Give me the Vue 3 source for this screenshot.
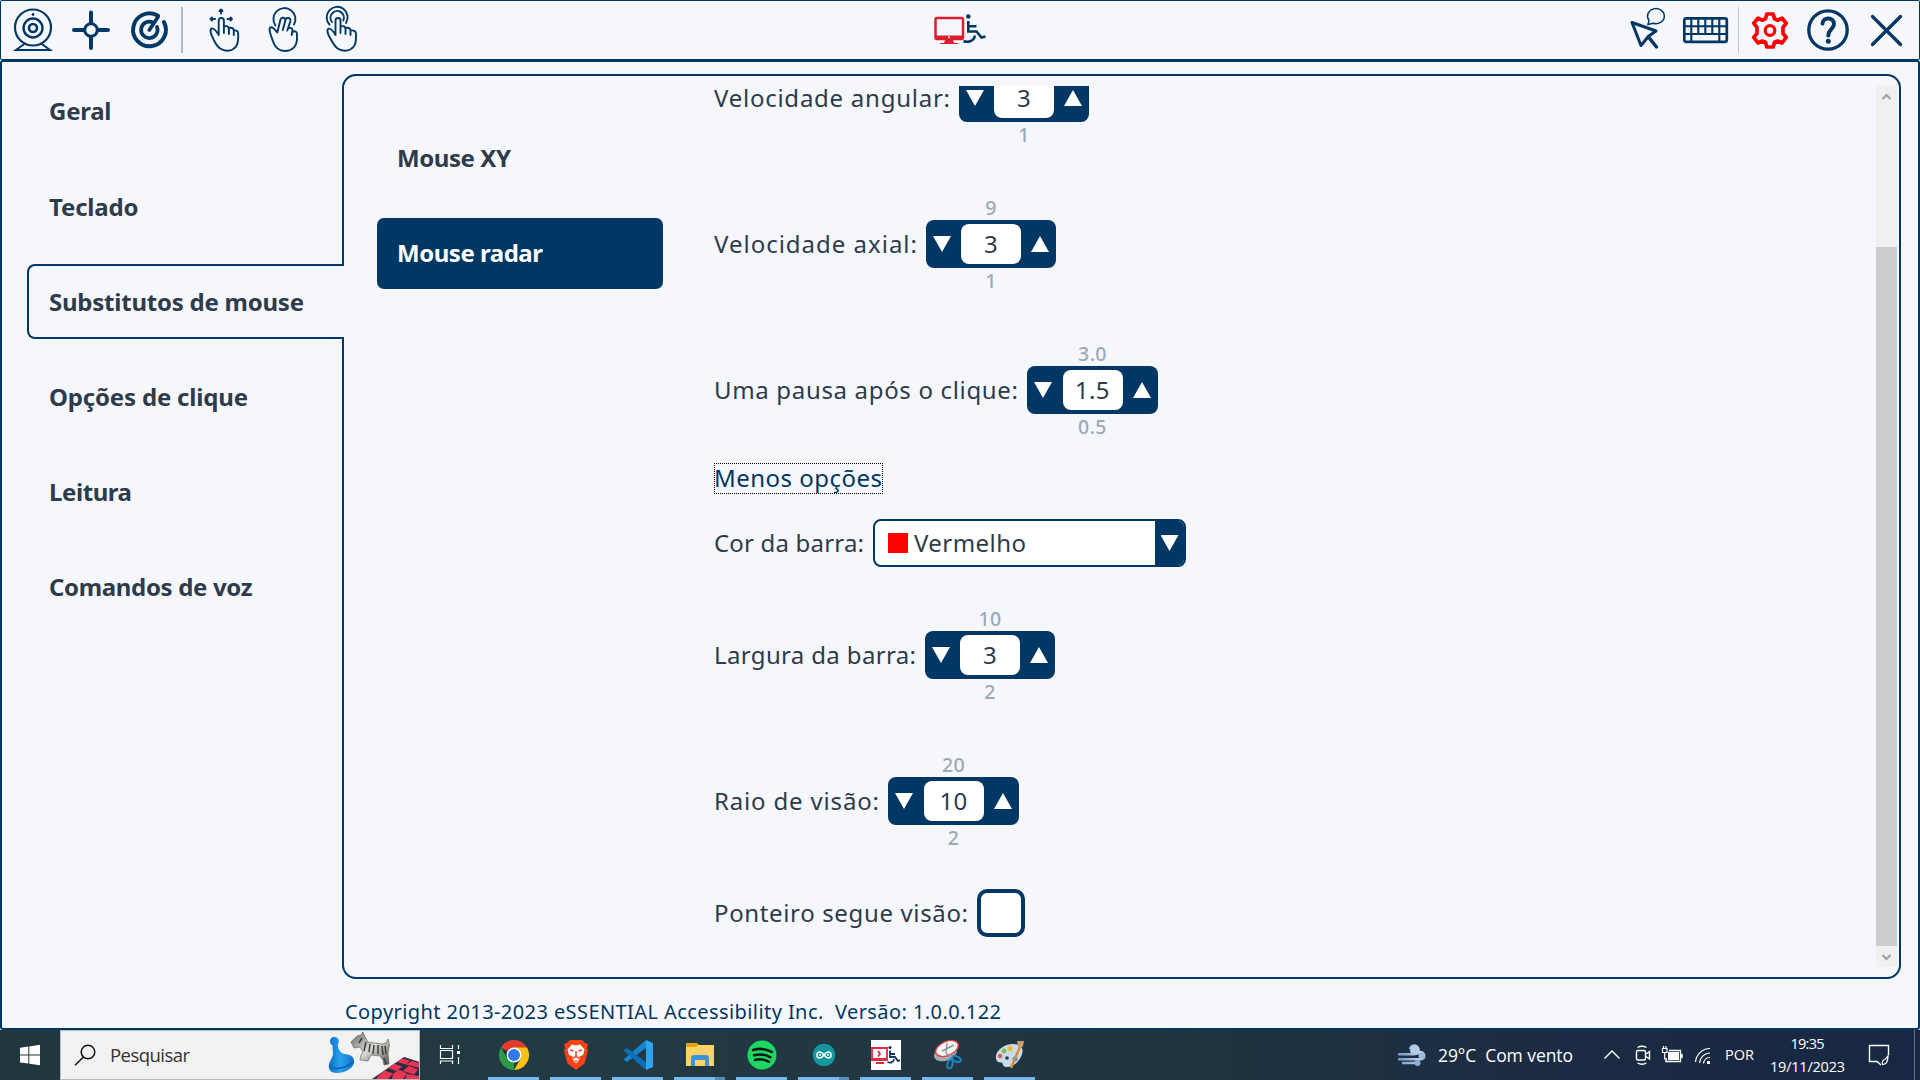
<script setup>
// Spreads a text run over an exact width by adjusting its tracking.
const vFit = {
  mounted(el, { value }) {
    const natural = el.getBoundingClientRect().width
    const gaps = el.textContent.length - 1
    el.style.letterSpacing = `${(value - natural) / gaps}px`
    el.style.width = `${value}px`
  },
}

const tabs = [
  { text: 'Geral', w: 62.5 },
  { text: 'Teclado', w: 89.5 },
  { text: 'Substitutos de mouse', w: 255, active: true },
  { text: 'Opções de clique', w: 199 },
  { text: 'Leitura', w: 83 },
  { text: 'Comandos de voz', w: 203.5 },
]

const speeds = [
  { label: 'Velocidade angular:', w: 236, value: '3', max: '9', min: '1' },
  { label: 'Velocidade axial:', w: 203, value: '3', max: '9', min: '1' },
  { label: 'Uma pausa após o clique:', w: 304, value: '1.5', max: '3.0', min: '0.5', wide: true },
]
const sizes = [
  { label: 'Largura da barra:', w: 202, value: '3', max: '10', min: '2' },
  { label: 'Raio de visão:', w: 165, value: '10', max: '20', min: '2', wide: true },
]
</script>

<template>
  <div class="screen">
    <header class="toolbar">
      <div class="tools">
        <svg width="60" height="60" viewBox="0 0 60 60" class="ico">
          <circle cx="33" cy="27.5" r="18" stroke-width="2.2" />
          <circle cx="33" cy="28" r="9.5" stroke-width="2.4" />
          <circle cx="33" cy="28" r="4" stroke-width="2.6" />
          <circle cx="33" cy="14.500" r="1.400" class="solid" />
          <path d="M25 43.500 16 50H50L41 43.500" stroke-width="2" />
        </svg>
        <svg width="60" height="60" viewBox="60 0 60 60" class="ico">
          <path d="M74 30H84M98 30H108M91 12.500V23M91 37V48" stroke-width="4" />
          <circle cx="91" cy="30" r="6.300" stroke-width="3" />
        </svg>
        <svg width="60" height="60" viewBox="120 0 60 60" class="ico">
          <path d="M158 15.800A16.400 16.400 0 1 0 163.900 22" stroke-width="4" />
          <path d="M152.500 22.300A8.200 8.200 0 1 0 157 27" stroke-width="3.700" />
          <path d="M149.300 30 158 17" stroke-width="3.700" />
        </svg>
        <i class="divider"></i>
        <svg width="63" height="60" viewBox="190 0 63 60" class="ico thin">
          <path d="M218.700 35V20.500a2.600 2.600 0 0 1 5.200 0V33M223.900 26.500c3-1 4.800 0 5 2.500V34M229 28c3-.8 4.700.3 4.800 2.800V35M233.800 30.500c3-.5 4.400.8 4.400 3.500 0 5 .4 9-2.200 12.500-3.500 4.700-10.500 5.500-15.500 2.300-4-2.500-7-9-9-14-1.300-3.300-1.500-5.800.2-6.300 2.800-.8 4.800 3 7 6.500" />
          <path d="M221 13.500V10.500M219.500 11 221 9.500l1.500 1.500M215 19H210.500M212 17.500 210.500 19l1.500 1.500M227.500 19H232M230.500 17.500l1.500 1.500-1.500 1.500" />
        </svg>
        <svg width="57" height="60" viewBox="253 0 57 60" class="ico thin">
          <path d="M277.300 32.500C275.500 30 272.500 26 270.300 27.500 268.500 28.800 270 31.500 270.500 34L273 41.500C275 47.500 279.500 51 285 51c7 0 11.500-4.500 12-11.500V34c0-3-3-3.500-4.800-1.500M277.300 32.500 280.500 19.500a2.500 2.500 0 0 1 4.900.8L282.800 30M285.400 20a2.500 2.500 0 0 1 5 1L287.300 30.500M288.300 28.500c3-1.500 4.500 0 4.100 2.500L291.700 35" />
          <path d="M275.500 25.500A11 11 0 1 1 294 24.500" />
        </svg>
        <svg width="60" height="60" viewBox="310 0 60 60" class="ico thin">
          <path d="M335.500 35V20.500a2.500 2.500 0 0 1 5 0V33M340.500 26.500c3-1 4.900 0 5 2.500V34M345.500 28c3-.8 5 .3 5 2.800V35M350.500 30.500c3.500-.7 5.500 1 5.500 3.500 0 5 .5 9-2.200 12.500-3.800 4.700-10.800 5.500-15.800 2.300-4-2.500-7-9-9.500-14-1.500-3.300-1.500-5.500.2-6.100 2.600-.7 4.700 2.800 6.800 6.300" />
          <path d="M329.500 24.500A10.500 10.500 0 1 1 346 23M332 22A6.700 6.700 0 1 1 343.300 20.500" />
        </svg>
      </div>

      <svg width="80" height="60" viewBox="920 0 80 60">
        <rect x="935.500" y="18" width="27.500" height="21" rx="1.500" fill="none" stroke="#d91e2e" stroke-width="2.500" />
        <path d="M935 35.500H963V40H935ZM945 40H953L954 43H958V44H940V43H944Z" fill="#d91e2e" />
        <circle cx="949" cy="37.300" r="1" fill="#fff" />
        <circle cx="968.300" cy="16.500" r="2.300" fill="#003764" />
        <path d="M968.300 21V31.500H976.500L981.500 37.500 985.500 36.500M969 26.200H976.500M963.500 41C968 43 974.500 41 974.800 35.500" fill="none" stroke="#003764" stroke-width="2.600" />
      </svg>

      <div class="tools right">
        <svg width="54" height="60" viewBox="1619 0 54 60" class="ico">
          <path d="M1632 22.500 1656 31 1648.500 36.300 1641 45.500Z" stroke-width="3" stroke-linejoin="round" />
          <path d="M1648.500 37 1656.500 47" stroke-width="3.500" />
          <path d="M1648 24.500 1649 20.500A8.400 7.600 0 1 1 1653 23.300Z" stroke-width="1.500" />
        </svg>
        <svg width="64" height="60" viewBox="1673 0 64 60" class="ico">
          <rect x="1684.300" y="18.300" width="42.500" height="23.500" rx="2" stroke-width="2.700" />
          <path d="M1685 26.200H1726M1685 34H1726M1691.300 19V41M1698.300 19V34M1705.300 19V34M1712.300 19V34M1719.300 19V41" stroke-width="2.100" />
        </svg>
        <i class="divider slim"></i>
        <svg width="62" height="60" viewBox="1739 0 62 60" class="ico red">
          <circle cx="1770" cy="30.500" r="4.800" stroke-width="3.200" />
          <path d="M1766.800 14H1773.200L1774.500 18.800 1777.700 20.200 1782 18.200 1786.200 23.300 1783 27.300V33.500L1786.200 37.300 1782 43 1777.700 41 1774.500 42.300 1773.200 47H1766.800L1765.500 42.300 1762.300 41 1758 43 1753.800 37.300 1757 33.500V27.300L1753.800 23.300 1758 18.200 1762.300 20.200 1765.500 18.800Z" stroke-width="3.700" stroke-linejoin="round" />
        </svg>
        <svg width="57" height="60" viewBox="1801 0 57 60" class="ico">
          <circle cx="1828" cy="30" r="19.200" stroke-width="3.300" />
          <path d="M1822.500 23.500C1823 16.500 1834 17 1834 24 1834 29 1828.300 29.500 1828.300 35.500" stroke-width="4" />
          <circle cx="1828.300" cy="41.300" r="2.500" class="solid" />
        </svg>
        <svg width="62" height="60" viewBox="1858 0 62 60" class="ico">
          <path d="M1872.500 16.500 1900.500 44.500M1900.500 16.500 1872.500 44.500" stroke-width="3.300" />
        </svg>
      </div>
    </header>

    <main class="window">
      <div class="body">
        <nav class="tabs">
          <a v-for="t in tabs" :key="t.text" class="tab" :class="{ active: t.active }"><span v-fit="t.w" class="run">{{ t.text }}</span></a>
        </nav>
        <section class="panel">
          <nav class="subtabs">
            <a class="sub"><span v-fit="114" class="run">Mouse XY</span></a>
            <a class="sub on"><span v-fit="146" class="run">Mouse radar</span></a>
          </nav>
          <div class="options">
            <div v-for="o in speeds" :key="o.label" class="row spaced">
              <span v-fit="o.w" class="run">{{ o.label }}</span>
              <div class="spin" :class="{ wide: o.wide }">
                <small class="max">{{ o.max }}</small>
                <i class="down"></i><b class="field">{{ o.value }}</b><i class="up"></i>
                <small class="min">{{ o.min }}</small>
              </div>
            </div>
            <a class="less"><span v-fit="168" class="run">Menos opções</span></a>
            <div class="row colour">
              <span v-fit="150" class="run">Cor da barra:</span>
              <div class="select">
                <i class="swatch"></i><span v-fit="112" class="run">Vermelho</span>
                <span class="drop"><i class="down"></i></span>
              </div>
            </div>
            <div v-for="o in sizes" :key="o.label" class="row spaced">
              <span v-fit="o.w" class="run">{{ o.label }}</span>
              <div class="spin" :class="{ wide: o.wide }">
                <small class="max">{{ o.max }}</small>
                <i class="down"></i><b class="field">{{ o.value }}</b><i class="up"></i>
                <small class="min">{{ o.min }}</small>
              </div>
            </div>
            <div class="row follow">
              <span v-fit="254" class="run">Ponteiro segue visão:</span>
              <i class="check"></i>
            </div>
          </div>
          <div class="scroll">
            <svg width="21" height="21" viewBox="0 0 21 21"><path d="M6.500 13 10.500 9l4 4" /></svg>
            <i class="thumb"></i>
            <svg width="21" height="21" viewBox="0 0 21 21"><path d="M6.500 9l4 4 4-4" /></svg>
          </div>
        </section>
      </div>
      <footer class="copy"><span v-fit="656" class="run">Copyright 2013-2023 eSSENTIAL Accessibility Inc.&nbsp; Versão: 1.0.0.122</span></footer>
    </main>

    <div class="taskbar">
      <svg width="60" height="50" viewBox="0 0 60 50">
        <path d="M20 17.700 28.300 16.500V24.600H20ZM29.300 16.400 40 14.800V24.600H29.300ZM20 25.600H28.300V33.600L20 32.500ZM29.300 25.600H40V35.300L29.300 33.800Z" fill="#fff" />
      </svg>
      <div class="search">
        <svg width="49" height="48" viewBox="61 1 49 48" fill="none" stroke="#111" stroke-width="1.500">
          <circle cx="88" cy="22" r="6.800" /><path d="M83.500 27 75 35.300" />
        </svg>
        <span v-fit="80" class="run">Pesquisar</span>
        <svg class="games" width="96" height="48" viewBox="323 1 96 48">
          <defs>
            <linearGradient id="pawn" x1="0" x2="1"><stop offset="0" stop-color="#0c6fc4" /><stop offset=".45" stop-color="#2ba1ef" /><stop offset="1" stop-color="#0a72cb" /></linearGradient>
            <linearGradient id="dog" x1="0" x2="1" y2="1"><stop offset="0" stop-color="#696965" /><stop offset=".5" stop-color="#d8d8d0" /><stop offset="1" stop-color="#555551" /></linearGradient>
          </defs>
          <path d="M330 12a4.500 4.500 0 1 1 8 2c-.5 4 1.500 8 6 10 7 0 11 4 10 8.500-1 6-9 10.500-17 10.500-6 0-9-3.500-8-8.500.5-3 3-6 4-10l-.5-9a4 4 0 0 1-2.500-3.500Z" fill="url(#pawn)" />
          <path d="M330 36c2 4 18 3 23-5" fill="none" stroke="#0862b0" stroke-width="1.500" />
          <path d="M351 12 357 6 361 5 363 2 365 7 368 12 382 14 386 13 388 9 389.500 15 388 23 389 34 384 35 383 30 380 26 371 25 368 31 360 30 361 25 363 22 360 17 354 18Z" fill="url(#dog)" stroke="#555" stroke-width=".6" />
          <path d="M370 14l-1 8M374 15l-1 9M378 15v9M382 16l1 9M385 16l1 8M362 8l-3 5M366 12l-2 9M384 28l2 6" stroke="#3d3d3b" stroke-width="1.500" />
          <path d="M372 49 404 27 420 32V50Z" fill="#2a2b45" />
          <path d="M397 32 402 28.500 410 30.500 406 34.500ZM388 38l6-4.500 8 3-5.500 4.500ZM406 34.500 412 31 420 33V38ZM403 41l6-5 9 3.500-4 5ZM379 45l6-4.500 8 3L388 49H376ZM393 44l6-4.500 8 4-4 5.500H392ZM407 44l12 2v4H405Z" fill="#e83550" />
        </svg>
      </div>
      <svg width="60" height="50" viewBox="420 0 60 50" fill="none" stroke="#fff" stroke-width="1.200">
        <path d="M440.500 15V18.500H452.500V15M440.500 34V31H452.500V34M440.500 20.500H452.500V28.500H440.500ZM458.500 15V19M458.500 27V34" /><path d="M457 21H460V24H457Z" fill="#fff" stroke="none" />
      </svg>

      <div class="app">
        <svg width="32" height="32" viewBox="-16 -16 32 32">
          <path d="M0 0-13-7.500A15 15 0 0 1 13-7.500Z" fill="#e33b2e" />
          <path d="M0 0V15A15 15 0 0 1-13-7.500L-6.500 3.800Z" fill="#2c9a48" />
          <path d="M0-7.500H13A15 15 0 0 1 0 15L6.500 3.800Z" fill="#fbc116" />
          <circle r="7.500" fill="#fff" /><circle r="6" fill="#3079ea" />
        </svg>
      </div>
      <div class="app">
        <svg width="32" height="32" viewBox="-16 -16 32 32">
          <path d="M-6-15H6L9-12 12-11 11-7 12-4 8.500 8.500 0 15-8.500 8.500-12-4-11-7-12-11-9-12Z" fill="#fa4216" />
          <path d="M-4-10.500 0-9.500 4-10.500 8.500-5.500 7 0 3.500 1.500 3 5 0 8.500-3 5-3.500 1.500-7 0-8.500-5.500Z" fill="#fff" />
          <path d="M-6-5-2.500-4M6-5 2.500-4M0-4V2M-3 3 0 1.500 3 3M-1 6H1" stroke="#fa4216" stroke-width="1.500" fill="none" />
        </svg>
      </div>
      <div class="app">
        <svg width="32" height="32" viewBox="-16 -16 32 32">
          <path d="M8-15V-7L-11 7-14.500 4.500Z" fill="#1683cc" /><path d="M8 15V7L-11-7-14.500-4.500Z" fill="#0b6fb8" />
          <path d="M8-15 15-12V12L8 15Z" fill="#2ca5ee" />
        </svg>
      </div>
      <div class="app multi">
        <svg width="32" height="32" viewBox="-16 -16 32 32">
          <path d="M-14-12H-3L0-9V-5H-14Z" fill="#e6a209" /><path d="M-14-8H-4L-2-10H14V11H-14Z" fill="#fdd368" />
          <path d="M-9 11V3Q-9 0-6 0H6Q9 0 9 3V11H5V5H-5V11Z" fill="#3f91d9" />
        </svg>
      </div>
      <div class="app">
        <svg width="32" height="32" viewBox="-16 -16 32 32">
          <circle r="14.500" fill="#1ed760" /><path d="M-9-5Q1-8 10-3M-8 .3Q1-2 8.500 2.300M-7 5Q0 3 7 6.800" fill="none" stroke="#0d1a14" stroke-width="2.500" stroke-linecap="round" />
        </svg>
      </div>
      <div class="app multi">
        <svg width="32" height="32" viewBox="-16 -16 32 32">
          <circle r="11.200" fill="#11979d" /><path d="M0 0C-3-4-7-4-7 0S-3 4 0 0 7-4 7 0 3 4 0 0M-5 0H-3M3 0H5" fill="none" stroke="#fff" stroke-width="1.500" />
        </svg>
      </div>
      <div class="app">
        <svg width="32" height="32" viewBox="-16 -16 32 32">
          <path d="M-15-15H15V15H-15Z" fill="#fff" /><path d="M-14-7H1V5H-14ZM-10 8H-2" fill="none" stroke="#e02c40" stroke-width="1.800" /><path d="M-14 3H1V6H-14Z" fill="#e02c40" /><path d="M-8-4-6-1-8 1.500" fill="none" stroke="#e02c40" stroke-width="1.800" />
          <circle cx="4" cy="-7.500" r="1.600" fill="#17375f" /><path d="M4-4.500V2H9L12 6 14 5M4-1H9M1.500 7C5 8.500 8 7 8 4" fill="none" stroke="#17375f" stroke-width="1.800" />
        </svg>
      </div>
      <div class="app">
        <svg width="32" height="32" viewBox="-16 -16 32 32">
          <ellipse cx="-2.500" cy="-2" rx="12" ry="7.500" transform="rotate(-22 -2.500 -2)" fill="#a6acb2" />
          <ellipse cx="-1" cy="-6.500" rx="12" ry="7" transform="rotate(-24 -1 -6.500)" fill="#f6f6f6" stroke="#d9403c" stroke-width="1.300" />
          <path d="M-1-12-2-2 5 5M-6-4 6-10" stroke="#8c9196" stroke-width="1.400" fill="none" />
          <ellipse cx="2" cy="9" rx="2.500" ry="4.500" transform="rotate(15 2 9)" fill="none" stroke="#1b85c6" stroke-width="2" /><ellipse cx="8.500" cy="4" rx="4.500" ry="2.500" transform="rotate(25 8.500 4)" fill="none" stroke="#1b85c6" stroke-width="2" />
        </svg>
      </div>
      <div class="app">
        <svg width="32" height="32" viewBox="-16 -16 32 32">
          <path d="M-14 3C-15-4-6-11 3-11 11-11 14-6 12-1 10 6 4 12-4 12c-4 0-2-4-5-4.500-3 0-5-1.500-5-4.500Z" fill="#c7dcea" />
          <circle cx="-10" cy="1" r="2.200" fill="#e0564c" /><circle cx="-6" cy="-4" r="2.400" fill="#7dbd4b" /><circle cx="0" cy="-6.500" r="2.500" fill="#f3b62c" /><circle cx="-3" cy="3" r="1.800" fill="#26384a" /><circle cx="5" cy="4" r="2.500" fill="#4b93d4" />
          <path d="M10-8 1 13" stroke="#d98a35" stroke-width="2.500" /><path d="M7-14 14-14 13-9 10-6 8-8Z" fill="#c9a06b" />
        </svg>
      </div>

      <div class="tray">
        <svg width="47" height="50" viewBox="1391 0 47 50">
          <defs><linearGradient id="wind" x2="1"><stop stop-color="#7296c4" /><stop offset="1" stop-color="#c8dcf2" /></linearGradient></defs>
          <path d="M1398 24.200H1413.500A4.300 4.300 0 1 0 1410 19M1398 29.200H1420A3.500 3.500 0 1 0 1417 24.500M1402 33H1416.500" fill="none" stroke="url(#wind)" stroke-width="2.600" />
          <circle cx="1414" cy="20" r="4" fill="#b3cbe7" /><circle cx="1422" cy="26" r="3.500" fill="#9db9dc" /><circle cx="1417.500" cy="33" r="3" fill="#8fb0d6" />
        </svg>
        <span v-fit="135" class="run">29°C&nbsp; Com vento</span>
        <svg width="150" height="50" viewBox="1573 0 150 50" fill="none" stroke="#fff" stroke-width="1.400">
          <path d="M1604.500 28.500 1612 21 1619.500 28.500" />
          <rect x="1636.500" y="20.500" width="9" height="9.500" rx="1.500" /><path d="M1646 24 1649.500 21.500V29L1646 26.500M1637.500 17.500Q1642 15 1646.500 17.500M1637.500 33Q1642 35.500 1646.500 33" />
          <path d="M1669 20.500H1680.500V31.500H1666V28M1682 24V28" /><path d="M1668 22H1679V30H1668Z" fill="#fff" stroke="none" /><path d="M1662.500 18.500H1667V22.500H1662.500ZM1663.500 16V18.500M1666 16V18.500M1664.700 23V29H1667" stroke-width="1.200" />
          <path d="M1695.500 32C1696 25 1702 18.500 1710 18.500M1699.500 33C1700 27.500 1704.500 23 1710 23M1703.500 33.500C1704 30 1706.500 27.500 1710 27.500" stroke-width="1.200" /><path d="M1707 31H1710V34H1707Z" fill="#fff" stroke="none" />
        </svg>
        <span v-fit="29" class="run lang">POR</span>
        <div class="clock"><span v-fit="34" class="run">19:35</span><span v-fit="75" class="run">19/11/2023</span></div>
        <svg width="64" height="50" viewBox="1850 0 64 50" fill="none" stroke="#fff" stroke-width="1.400">
          <path d="M1877 31.500H1869.500V15.500H1888.500V25M1873 31.500H1877L1881 35" /><path d="M1888 26C1888 32 1886.500 34.500 1882.500 34.500 1881.500 31.500 1883.500 29.500 1885.500 29Z" stroke-width="1.200" />
        </svg>
        <i class="peek"></i>
      </div>
    </div>
  </div>
</template>

<style>
body { margin: 0; background: #1c2d3f; overflow: hidden; }
</style>

<style scoped>
* { box-sizing: border-box; }
.screen { width: 1920px; height: 1080px; display: flex; flex-direction: column; font-family: "Noto Sans", "Open Sans", sans-serif; font-size: 24px; line-height: 32px; color: #2e3b4b; background: #f6f7fc; }
svg { display: block; flex: none; }
i, b, small { font-style: normal; font-weight: 400; }
.run { display: inline-block; white-space: pre; flex: none; }

.toolbar { height: 60px; display: flex; box-shadow: inset 0 0 0 1px #003764; border-radius: 2px; }
.tools { display: flex; align-items: center; width: 920px; }
.right { justify-content: flex-end; }
.ico { fill: none; stroke: #003764; stroke-linecap: round; }
.solid { fill: #003764; stroke: none; }
.thin { stroke-width: 1.9; stroke-linejoin: round; }
.red { stroke: #f00; }
.divider { width: 2px; height: 46px; margin: 0 7px 0 1px; background: #b1b8c1; }
.slim { width: 1px; margin: 0 0 0 1px; background: #bfc2c8; }

.window { height: 970px; border: 2px solid #003764; border-radius: 3px; display: flex; flex-direction: column; }
.body { display: flex; height: 917px; padding: 12px 17px 0 25px; }
.tabs { width: 317px; z-index: 1; }
.tab { display: flex; align-items: center; height: 75px; padding-left: 22px; margin-bottom: 20px; font-weight: 700; }
.tab:first-child { padding-bottom: 1px; }
.tab.active { border: 2px solid #003764; border-right: 0; border-radius: 8px 0 0 8px; background: #f6f7fc; padding-left: 20px; }
.panel { width: 1559px; height: 905px; margin-left: -2px; border: 2px solid #003764; border-radius: 14px; display: flex; padding: 10px 2px 10px 33px; }
.subtabs { width: 337px; padding-top: 37px; }
.sub { display: flex; align-items: center; width: 286px; height: 71px; padding: 0 0 2px 20px; margin-bottom: 24px; border-radius: 7px; font-weight: 700; }
.on { background: #003764; color: #fff; }
.options { width: 1162px; height: 881px; overflow: hidden; }
.row { display: flex; align-items: center; gap: 9px; height: 48px; }
.options > .row:first-child { margin-top: -12px; }
.spaced { margin-bottom: 98px; }
.spaced:has(+ .less) { margin-bottom: 49px; }
.spaced:has(+ .follow) { margin-bottom: 64px; }
.spin { position: relative; display: flex; align-items: center; justify-content: space-between; width: 130px; height: 48px; padding: 0 7px; border-radius: 8px; background: #003764; }
.wide { width: 131px; }
.field { width: 60px; height: 40px; line-height: 40px; border-radius: 8px; background: #fff; text-align: center; letter-spacing: .3px; }
.down, .up { width: 18px; height: 16px; background: #fff; }
.down { clip-path: polygon(0 0, 100% 0, 50% 100%); }
.up { clip-path: polygon(50% 0, 100% 100%, 0 100%); }
.spin small { position: absolute; left: 0; width: 100%; text-align: center; font-size: 19.5px; font-weight: 500; line-height: 24px; color: #9ca9b7; letter-spacing: .4px; }
.max { top: -24px; }
.min { bottom: -25px; }
.less { display: block; width: 169px; height: 31px; border: 1px dotted #000; color: #003764; }
.less .run { line-height: 28px; margin-left: -1px; vertical-align: top; }
.colour { margin: 25px 0 64px; }
.select { display: flex; align-items: center; width: 313px; height: 48px; border: 2px solid #003764; border-radius: 8px; background: #fff; padding-left: 13px; overflow: hidden; }
.swatch { width: 20px; height: 20px; margin: 0 6px 0 0; background: #f00; }
.drop { display: flex; align-items: center; justify-content: center; width: 29px; height: 46px; margin-left: auto; background: #003764; }
.check { width: 48px; height: 48px; border: 4px solid #003764; border-radius: 10px; background: #fff; }
.scroll { width: 21px; height: 881px; background: #f0f0f0; display: flex; flex-direction: column; }
.scroll path { fill: none; stroke: #9f9f9f; stroke-width: 2; }
.thumb { height: 699px; margin-top: auto; background: #cdcdcd; }
.copy { padding: 19px 0 0 343px; font-size: 20px; line-height: 28px; color: #003764; }

.taskbar { display: flex; width: 1920px; height: 50px; background: linear-gradient(90deg, #21363d 0%, #223a43 30%, #20343f 60%, #1b2b43 82%, #182743 100%); }
.search { display: flex; align-items: center; width: 360px; height: 50px; border: 1px solid #b9b9b9; background: #f2f2f2; font-family: "Open Sans", sans-serif; font-size: 18.5px; color: #333; }
.games { margin-left: auto; }
.app { position: relative; left: -1px; width: 51px; height: 50px; margin: 0 2px 0 9px; border-bottom: 3px solid #76b9ed; display: flex; align-items: center; justify-content: center; padding-top: 3px; }
.multi::after { content: ""; position: absolute; right: 0; bottom: -3px; width: 10px; height: 3px; background: #5a8db8; }
.tray { display: flex; align-items: center; margin-left: auto; font-family: "Open Sans", sans-serif; color: #fff; font-size: 17.5px; }
.lang { margin-left: 2px; font-size: 14.5px; }
.clock { display: flex; flex-direction: column; align-items: center; width: 75px; margin: 0 5px 1px 16px; font-size: 14.5px; line-height: 23px; }
.peek { width: 6px; height: 50px; border-left: 1px solid #66728a; }
</style>
